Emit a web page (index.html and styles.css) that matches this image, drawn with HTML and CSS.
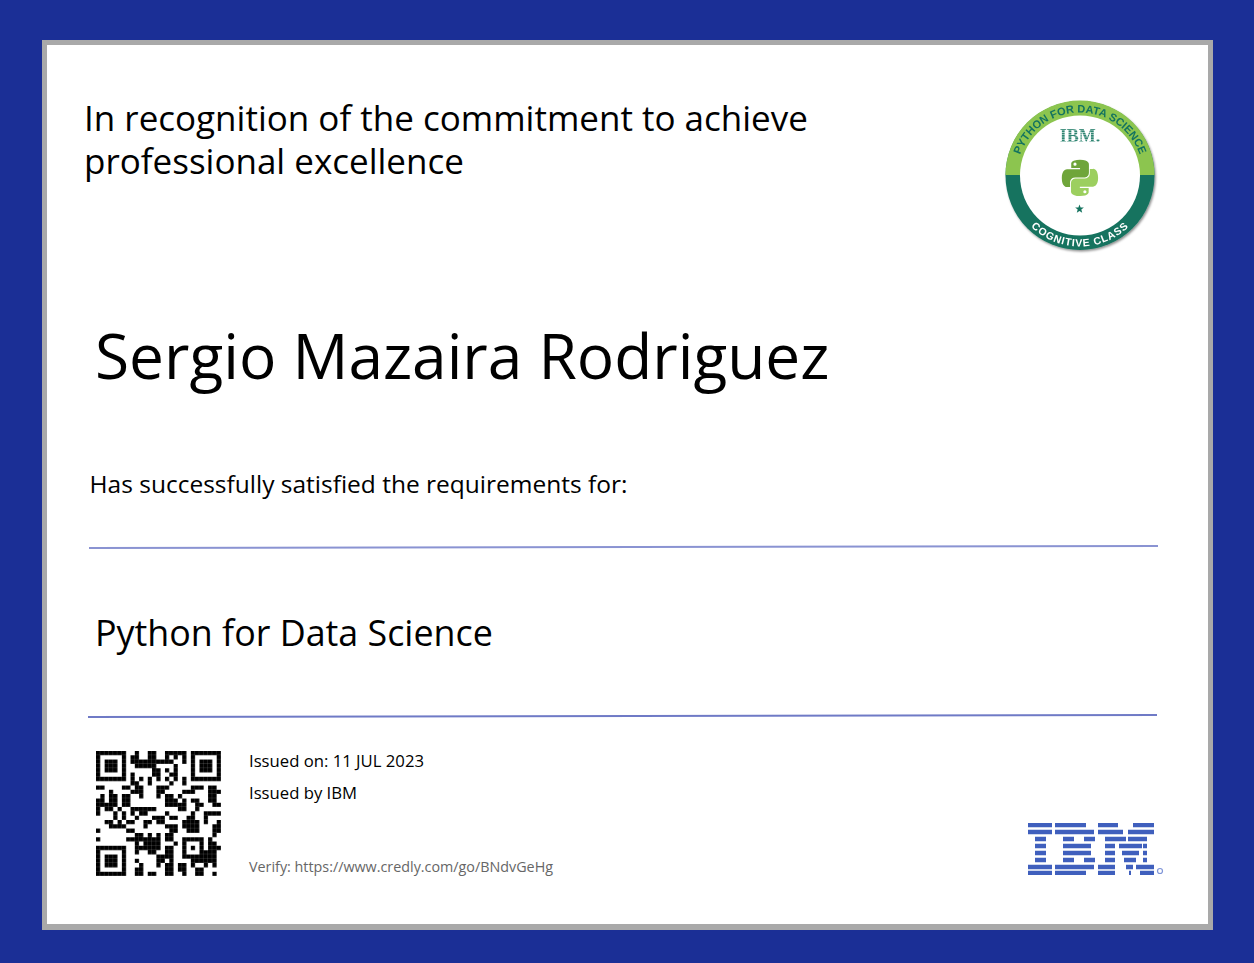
FILE: index.html
```html
<!DOCTYPE html>
<html lang="en">
<head>
<meta charset="utf-8">
<title>Python for Data Science certificate</title>
<link rel="stylesheet" href="styles.css">
</head>
<body>
<main class="cert">
  <header class="head">
    <h1 class="recognition">In recognition of the commitment to achieve<br>professional excellence</h1>
    <svg class="badge" viewBox="0 0 160 160" role="img" aria-label="Python for Data Science badge">
      <defs>
        <path id="arcTop" d="M16.500 80a63.500 63.500 0 0 1 127 0"/>
        <path id="arcBottom" d="M9.500 80a70.500 70.500 0 0 0 141 0"/>
        <filter id="soft" x="-10%" y="-10%" width="125%" height="125%"><feDropShadow dx="1.2" dy="1.5" stdDeviation="1.2" flood-color="#000" flood-opacity=".45"/></filter>
        <pattern id="ibmStripes" width="4" height="2.300" patternUnits="userSpaceOnUse"><rect width="4" height="1.800" class="b-stripe"/></pattern>
        <path id="snake" d="M54.9 0C26.9 0 28.6 12.2 28.6 12.2v12.6h26.7v3.8H18S0 26.5 0 55c0 28.5 15.7 27.5 15.7 27.500h9.4V69.3s-.5-15.7 15.5-15.7h26.6s15 .2 15-14.5V14.7S84.5 0 54.9 0zM40 8.5a4.8 4.8 0 1 1 0 9.6 4.8 4.8 0 0 1 0-9.6z"/>
      </defs>
      <circle class="b-base" cx="80" cy="79.500" r="74.500" filter="url(#soft)"/>
      <path class="b-top" d="M5.500 79a74.500 74.500 0 0 1 149 0z"/>
      <circle class="b-inner" cx="80" cy="79.500" r="60"/>
      <text class="b-text b-text-top"><textPath href="#arcTop" startOffset="50%" text-anchor="middle">PYTHON FOR DATA SCIENCE</textPath></text>
      <text class="b-text b-text-bottom"><textPath href="#arcBottom" startOffset="50%" text-anchor="middle">COGNITIVE CLASS</textPath></text>
      <text class="b-ibm" x="80" y="46" fill="url(#ibmStripes)">IBM.</text>
      <g transform="translate(61.800 63.800) scale(.33)">
        <use href="#snake" class="b-snake-a"/>
        <use href="#snake" class="b-snake-b" transform="rotate(180 55 55)"/>
      </g>
      <polygon class="b-star" points="79.5,108.4 80.62,111.46 83.87,111.58 81.31,113.59 82.2,116.72 79.5,114.9 76.8,116.72 77.69,113.59 75.13,111.58 78.38,111.46"/>
    </svg>
  </header>

  <p class="name">Sergio Mazaira Rodriguez</p>
  <p class="requirements">Has successfully satisfied the requirements for:</p>
  <hr class="rule">
  <h2 class="course">Python for Data Science</h2>
  <hr class="rule rule-low">

  <footer class="foot">
    <svg class="qr" viewBox="0 0 29 29" role="img" aria-label="QR code">
      <defs>
        <pattern id="seam" width="1" height="1" patternUnits="userSpaceOnUse"><path d="M1 0V1H0" class="qr-seam"/></pattern>
      </defs>
      <path class="qr-finder" d="M.5 .5h6v6h-6zM22.500 .5h6v6h-6zM.5 22.500h6v6h-6z"/>
      <path class="qr-eye" d="M2 2h3v3H2zM24 2h3v3h-3zM2 24h3v3H2z"/>
      <path class="qr-bits" d="M9 .5h1M12 .5h2M16 .5h5
        M8 1.500h2M12 1.500h2M16 1.500h1M18 1.500h1M20 1.500h1
        M8 2.500h10M20 2.500h1
        M9 3.500h5M18 3.500h1
        M13 4.500h2M16 4.500h1M18 4.500h1
        M8 5.500h1M13 5.500h2M17 5.500h2
        M8 6.500h1M10 6.500h1M12 6.500h1M14 6.500h1M16 6.500h1M18 6.500h1M20 6.500h1
        M8 7.500h2M12 7.500h1M17 7.500h1M20 7.500h1
        M0 8.500h2M6 8.500h2M9 8.500h2M14 8.500h3M22 8.500h3M26 8.500h2
        M3 9.500h1M8 9.500h3M14 9.500h2M20 9.500h3M26 9.500h3
        M1 10.500h1M3 10.500h2M6 10.500h2M10 10.500h1M14 10.500h1M16 10.500h2M19 10.500h1M26 10.500h2
        M0 11.500h2M3 11.500h2M6 11.500h2M16 11.500h3M20 11.500h1M22 11.500h2M26 11.500h2
        M0 12.500h5M6 12.500h2M16 12.500h5M23 12.500h2M27 12.500h2
        M0 13.500h1M2 13.500h2M5 13.500h1M8 13.500h6M19 13.500h2M23 13.500h1
        M0 14.500h1M4 14.500h1M6 14.500h1M8 14.500h1M10 14.500h2M16 14.500h1M22 14.500h1M25 14.500h4
        M4 15.500h1M6 15.500h1M9 15.500h1M13 15.500h3M17 15.500h2M21 15.500h2M25 15.500h1
        M2 16.500h2M5 16.500h1M7 16.500h2M11 16.500h2M14 16.500h2M20 16.500h4M25 16.500h1M28 16.500h1
        M3 17.500h4M11 17.500h1M16 17.500h3M20 17.500h4M27 17.500h2
        M0 18.500h1M7 18.500h2M17 18.500h2M21 18.500h3M27 18.500h2
        M9 19.500h2M12 19.500h1M14 19.500h1M16 19.500h2M27 19.500h1
        M0 20.500h1M7 20.500h8M16 20.500h2M20 20.500h5M26 20.500h1
        M9 21.500h1M11 21.500h4M18 21.500h1M20 21.500h1M24 21.500h1M26 21.500h2
        M9 22.500h6M16 22.500h2M20 22.500h1M22 22.500h1M24 22.500h1M26 22.500h3
        M9 23.500h1M12 23.500h2M16 23.500h2M20 23.500h1M24 23.500h4
        M14 24.500h4M20 24.500h8
        M9 25.500h1M14 25.500h2M17 25.500h1M22 25.500h6
        M10 26.500h1M14 26.500h1M16 26.500h2M19 26.500h2M22 26.500h1M25 26.500h1M27 26.500h1
        M9 27.500h2M16 27.500h2M19 27.500h2M23 27.500h2
        M9 28.500h2M12 28.500h2M16 28.500h2M20 28.500h1M23 28.500h2M27 28.500h1"/>
      <rect width="29" height="29" fill="url(#seam)"/>
    </svg>
    <div class="issued">
      <p class="issued-line">Issued on: 11 JUL 2023</p>
      <p class="issued-line">Issued by IBM</p>
      <p class="verify">Verify: https://www.credly.com/go/BNdvGeHg</p>
    </div>
    <svg class="ibm" viewBox="0 0 137 52" role="img" aria-label="IBM">
      <path class="ibm-bars" d="M0 2h24M27 2h31M70 2h20M105 2h21
        M0 9h24M27 9h39M70 9h25M100 9h26
        M7 16h11M35 16h11M56 16h11M77 16h21M100 16h19
        M7 23h11M35 23h28M77 23h10M91 23h23M115 23h4
        M7 30h11M35 30h28M77 30h10M94 30h17M115 30h4
        M7 37h11M35 37h11M56 37h11M77 37h10M96 37h12M115 37h4
        M0 44h24M27 44h39M70 44h17M98 44h7M108 44h18
        M0 50h24M27 50h31M70 50h17M101 50h2M112 50h14"/>
      <circle class="ibm-reg" cx="132" cy="48" r="2.500"/>
    </svg>
  </footer>
</main>
</body>
</html>
```

FILE: styles.css
```css
* { box-sizing: border-box; }
html, body { margin: 0; height: 100%; }
body {
  background: #1b2f96;
  padding: 40px 41px 33px 42px;
  font-family: "Open Sans", "Liberation Sans", sans-serif;
  color: #000;
}
.cert {
  height: 890px;
  background: #fff;
  border: 5px solid #a9a9a9;
  border-bottom-width: 6px;
  padding: 51px 44px 0 37px;
  display: flex;
  flex-direction: column;
}
.head {
  display: flex;
  justify-content: space-between;
  align-items: flex-start;
  height: 161px;
}
.recognition {
  margin: 0;
  font-size: 35px;
  line-height: 43px;
  font-weight: 400;
}
.badge {
  width: 160px;
  height: 160px;
  margin: 0 4px 0 0;
  flex: none;
  filter: blur(.35px);
}
.b-base { fill: #14735f; }
.b-top { fill: #8cc54f; }
.b-inner { fill: #fff; }
.b-text { font-family: "Liberation Sans", sans-serif; font-weight: 700; font-size: 11px; }
.b-text-top { fill: #14735f; }
.b-text-bottom { fill: #fff; font-size: 10.500px; letter-spacing: .8px; }
.b-ibm { font-family: "Liberation Serif", serif; font-weight: 700; font-size: 18px; text-anchor: middle; }
.b-stripe { fill: #2f8572; }
.b-snake-a { fill: #6fa53a; }
.b-snake-b { fill: #9ccf5f; }
.b-star { fill: #14735f; }

.name {
  margin: 56px 0 0 11px;
  font-size: 62.2px;
  line-height: 84px;
}
.requirements {
  margin: 69px 0 0 5.500px;
  font-size: 24.500px;
  line-height: 36px;
}
.rule {
  margin: 44px 6px 0 5px;
  border: 0;
  height: 2px;
  background: #8a93d2;
  transform: rotate(-.107deg);
}
.rule-low { margin: 0 7px 0 4px; background: #6f7ac6; }
.course {
  margin: 0 0 0 11px;
  padding: 60px 0 57px;
  font-size: 35.850px;
  line-height: 50px;
  font-weight: 400;
}
.foot {
  display: flex;
  align-items: flex-start;
  margin-top: 34px;
}
.qr { width: 125px; height: 125px; margin-left: 12px; flex: none; }
.qr-finder { fill: none; stroke: #000; stroke-width: 1; }
.qr-eye { fill: #000; }
.qr-bits { fill: none; stroke: #000; stroke-width: 1; }
.qr-seam { fill: none; stroke: #fff; stroke-width: .12; opacity: .45; }
.issued { margin-left: 28px; display: flex; flex-direction: column; height: 125px; }
.issued-line { margin: 0 0 8px; font-size: 16.700px; line-height: 24px; position: relative; top: -2px; }
.verify { margin: auto 0 -1px; font-size: 14.340px; line-height: 20px; color: #666; }
.ibm {
  width: 137px;
  height: 52px;
  margin: 72px -1px 0 auto;
  flex: none;
  filter: blur(.4px);
}
.ibm-bars { fill: none; stroke: #3f5fbd; stroke-width: 4.400; }
.ibm-reg { fill: none; stroke: #7f95d8; stroke-width: 1.200; }
```
